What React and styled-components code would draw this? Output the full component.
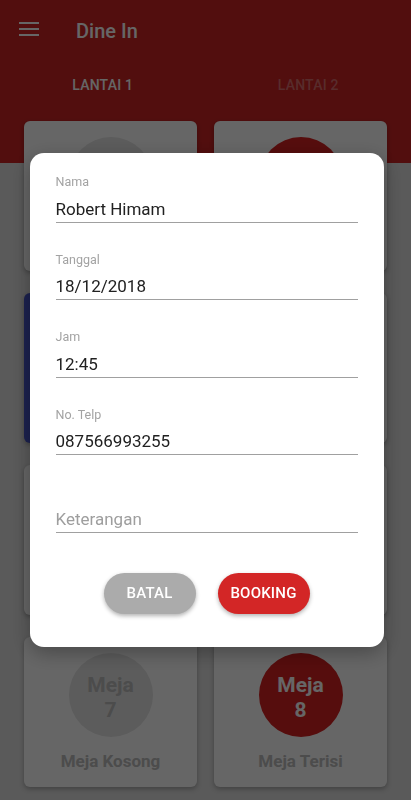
import styled, { createGlobalStyle } from 'styled-components';

const GlobalStyle = createGlobalStyle`
  html, body {
    margin: 0;
    padding: 0;
  }
  body {
    font-family: Roboto, "Noto Sans", "Liberation Sans", sans-serif;
    background-color: #e0e0e0;
  }
  * {
    box-sizing: border-box;
  }
`;

const Screen = styled.div`
  min-height: 800px;
  background: linear-gradient(to bottom, #cc2424 0, #cc2424 163px, #e0e0e0 163px);
`;

const Toolbar = styled.div`
  display: flex;
  align-items: center;
  height: 62px;
  padding-left: 19px;
  gap: 37px;
  color: #ffffff;
`;

const MenuIcon = styled.svg`
  display: block;
  margin-top: -4px;
`;

const Title = styled.h1`
  margin: 0;
  font-size: 20px;
  font-weight: 500;
  line-height: 24px;
`;

const Tabs = styled.div`
  display: grid;
  grid-template-columns: 1fr 1fr;
  height: 46px;
`;

const Tab = styled.div`
  display: flex;
  align-items: center;
  justify-content: center;
  font-size: 14px;
  font-weight: 500;
  letter-spacing: 0.2px;
  color: ${(p) => (p.$active ? '#ffffff' : 'rgba(255, 255, 255, 0.35)')};
`;

const TableGrid = styled.div`
  display: grid;
  grid-template-columns: 173px 173px;
  grid-auto-rows: 150px;
  column-gap: 17px;
  row-gap: 22px;
  padding: 13px 23px 13px 24px;
`;

const TableCard = styled.div`
  display: flex;
  flex-direction: column;
  align-items: center;
  padding-top: 16px;
  border-radius: 6px;
  background-color: ${(p) => (p.$booked ? '#4553c4' : '#ffffff')};
  box-shadow: 0 2px 5px rgba(0, 0, 0, 0.28);
`;

const Circle = styled.div`
  width: 84px;
  height: 84px;
  padding-top: 6px;
  border-radius: 50%;
  display: flex;
  flex-direction: column;
  align-items: center;
  justify-content: center;
  background-color: ${(p) => p.$bg};
  color: ${(p) => p.$fg};
  font-size: 21px;
  font-weight: 700;
  line-height: 25px;
  text-align: center;
`;

const TableLabel = styled.div`
  margin-top: 14px;
  font-size: 17px;
  font-weight: 700;
  line-height: 20px;
  color: ${(p) => (p.$booked ? '#ffffff' : '#bdbdbd')};
`;

const Overlay = styled.div`
  position: fixed;
  inset: 0;
  background-color: rgba(0, 0, 0, 0.6);
  display: flex;
  align-items: center;
  justify-content: center;
`;

const Dialog = styled.div`
  width: 354px;
  margin-left: 2px;
  background-color: #ffffff;
  border-radius: 14px;
  padding: 21px 26px 33px;
  box-shadow: 0 6px 20px rgba(0, 0, 0, 0.3);
`;

const Form = styled.div`
  display: flex;
  flex-direction: column;
  gap: 29px;
`;

const Field = styled.label`
  display: flex;
  flex-direction: column;
`;

const FieldLabel = styled.span`
  height: 16px;
  margin-bottom: 7px;
  font-size: 12.5px;
  line-height: 16px;
  color: #a3a3a3;
`;

const Input = styled.input`
  width: 100%;
  height: 25.5px;
  padding: 0 0 2px;
  border: none;
  border-bottom: 1.5px solid #a0a0a0;
  background: transparent;
  font-family: inherit;
  font-size: 17px;
  line-height: 22px;
  color: #212121;
  outline: none;

  &::placeholder {
    color: #9e9e9e;
  }
`;

const Actions = styled.div`
  display: flex;
  justify-content: center;
  gap: 22px;
  margin-top: 40px;
`;

const PillButton = styled.button`
  width: 92px;
  height: 41px;
  border: none;
  border-radius: 21px;
  background-color: ${(p) => (p.$primary ? '#d32626' : '#ababab')};
  color: #ffffff;
  font-family: inherit;
  font-size: 15px;
  font-weight: 500;
  letter-spacing: 0.2px;
  box-shadow: 0 2px 4px rgba(0, 0, 0, 0.3);
  cursor: pointer;
`;

const tables = [
  { no: 1, status: 'kosong' },
  { no: 2, status: 'terisi' },
  { no: 3, status: 'dipesan' },
  { no: 4, status: 'kosong' },
  { no: 5, status: 'kosong' },
  { no: 6, status: 'terisi' },
  { no: 7, status: 'kosong' },
  { no: 8, status: 'terisi' },
];

const statusStyle = {
  kosong: { bg: '#e6e6e6', fg: '#bdbdbd', label: 'Meja Kosong' },
  terisi: { bg: '#d62121', fg: '#ffffff', label: 'Meja Terisi' },
  dipesan: { bg: '#ffffff', fg: '#4553c4', label: 'Meja Dipesan' },
};

const fields = [
  { label: 'Nama', value: 'Robert Himam' },
  { label: 'Tanggal', value: '18/12/2018' },
  { label: 'Jam', value: '12:45' },
  { label: 'No. Telp', value: '087566993255' },
  { label: '', value: '', placeholder: 'Keterangan' },
];

const App = () => {
  return (
    <Screen>
      <GlobalStyle />
      <Toolbar>
        <MenuIcon width="20" height="14" viewBox="0 0 20 14">
          <rect x="0" y="0" width="20" height="2" fill="#ffffff" />
          <rect x="0" y="6" width="20" height="2" fill="#ffffff" />
          <rect x="0" y="12" width="20" height="2" fill="#ffffff" />
        </MenuIcon>
        <Title>Dine In</Title>
      </Toolbar>
      <Tabs>
        <Tab $active>LANTAI 1</Tab>
        <Tab>LANTAI 2</Tab>
      </Tabs>
      <TableGrid>
        {tables.map((t) => {
          const s = statusStyle[t.status];
          const booked = t.status === 'dipesan';
          return (
            <TableCard key={t.no} $booked={booked}>
              <Circle $bg={s.bg} $fg={s.fg}>
                <span>Meja</span>
                <span>{t.no}</span>
              </Circle>
              <TableLabel $booked={booked}>{s.label}</TableLabel>
            </TableCard>
          );
        })}
      </TableGrid>

      <Overlay>
        <Dialog>
          <Form>
            {fields.map((f, i) => (
              <Field key={i}>
                <FieldLabel>{f.label}</FieldLabel>
                <Input defaultValue={f.value} placeholder={f.placeholder} />
              </Field>
            ))}
          </Form>
          <Actions>
            <PillButton>BATAL</PillButton>
            <PillButton $primary>BOOKING</PillButton>
          </Actions>
        </Dialog>
      </Overlay>
    </Screen>
  );
};

export default App;
